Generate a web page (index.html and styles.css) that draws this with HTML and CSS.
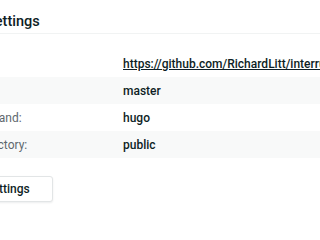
FILE: index.html
```html
<!DOCTYPE html>
<html>
<head>
<meta charset="utf-8">
<link rel="stylesheet" href="styles.css">
</head>
<body>
<section class="panel">
  <h2 class="title">Build settings</h2>
  <dl class="rows">
    <div class="row">
      <dt class="label">Repository:</dt>
      <dd class="value"><a class="link" href="#">https://github.com/RichardLitt/interrupt-list</a></dd>
    </div>
    <div class="row alt">
      <dt class="label">Branch:</dt>
      <dd class="value">master</dd>
    </div>
    <div class="row">
      <dt class="label">Build command:</dt>
      <dd class="value">hugo</dd>
    </div>
    <div class="row alt">
      <dt class="label">Publish directory:</dt>
      <dd class="value">public</dd>
    </div>
  </dl>
  <div class="actions">
    <button class="btn">Edit settings</button>
  </div>
</section>
</body>
</html>
```

FILE: styles.css
```css
html, body {
  margin: 0;
  padding: 0;
  background: #ffffff;
  overflow: hidden;
  width: 320px;
  height: 214px;
}
body {
  font-family: Roboto, "Liberation Sans", Arial, sans-serif;
  color: #0e1e25;
}
.panel {
  margin-left: -65px;
  width: 460px;
}
.title {
  margin: 0;
  padding: 13px 0 3px 16px;
  font-size: 14.5px;
  line-height: 17px;
  font-weight: 500;
  color: #0e1e25;
  border-bottom: 1px solid #f1f3f3;
}
.rows {
  margin: 16px 0 0 0;
  padding: 0;
}
.row {
  display: flex;
  align-items: center;
  height: 27px;
}
.row.alt {
  background: #f8f9f9;
}
.label {
  width: 188px;
  flex: none;
  font-size: 12px;
  color: #5e686e;
}
.value {
  margin: 0;
  font-size: 12px;
  font-weight: 500;
  color: #0e1e25;
  white-space: nowrap;
}
.link {
  color: #0e1e25;
  text-decoration: underline;
}
.actions {
  padding: 18px 0 0 15px;
}
.btn {
  font-family: Roboto, "Liberation Sans", Arial, sans-serif;
  font-size: 12px;
  font-weight: 500;
  color: #0e1e25;
  background: #ffffff;
  border: 1px solid #e2e5e6;
  border-radius: 3px;
  box-shadow: 0 1px 2px rgba(14, 30, 37, 0.08);
  height: 26px;
  padding: 0 22px 0 12px;
}
```
